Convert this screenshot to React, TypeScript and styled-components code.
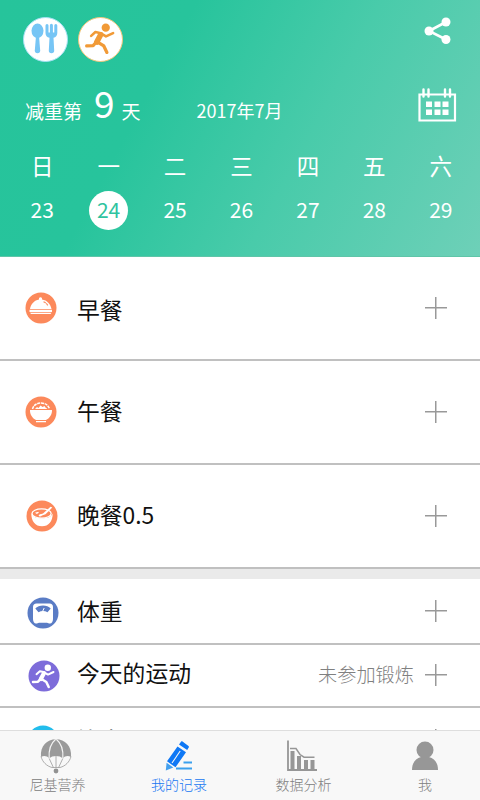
import React from 'react';
import styled, { createGlobalStyle } from 'styled-components';

const GlobalStyle = createGlobalStyle`
  * { box-sizing: border-box; }
  body {
    margin: 0;
    background: #fff;
    font-family: "Noto Sans CJK SC", sans-serif;
  }
`;

const Screen = styled.div`
  width: 480px;
  height: 800px;
  display: flex;
  flex-direction: column;
  overflow: hidden;
  background: #fff;
`;

const Header = styled.header`
  flex: none;
  height: 257px;
  color: #fff;
  background: linear-gradient(118deg, #26c49b 0%, #27c49c 32%, #49cbaa 62%, #6ed0b8 100%);
  border-bottom: 1px solid #5fc5a8;
`;

const TopBar = styled.div`
  display: flex;
  align-items: flex-start;
  height: 84px;
  padding: 17px 28px 0 23px;
  gap: 10px;
`;

const RoundBadge = styled.div<{ $edge: string }>`
  width: 45px;
  height: 45px;
  border-radius: 50%;
  background: #fff;
  border: 1.5px solid ${(p) => p.$edge};
  display: flex;
  svg { display: block; }
`;

const ShareButton = styled.div`
  margin-left: auto;
  width: 28px;
  height: 28px;
  svg { display: block; }
`;

const SummaryBar = styled.div`
  display: flex;
  height: 60px;
  padding: 0 23px 0 25px;
`;

const Label = styled.span<{ $size: number; $left?: number; $top?: number }>`
  font-size: ${(p) => p.$size}px;
  line-height: 30px;
  height: 30px;
  margin-left: ${(p) => p.$left ?? 0}px;
  margin-top: ${(p) => p.$top ?? 0}px;
  white-space: nowrap;
`;

const CalendarButton = styled.div`
  margin: 4px 0 0 auto;
  height: 36px;
  svg { display: block; }
`;

const Week = styled.div`
  display: grid;
  grid-template-columns: repeat(7, 1fr);
  grid-template-rows: 41px 51px;
  padding: 0 6px 0 9px;
  place-items: center;
`;

const Weekday = styled.span`
  font-size: 22.5px;
  line-height: 38px;
`;

const DayNumber = styled.span<{ $active: boolean }>`
  width: 39px;
  height: 39px;
  border-radius: 50%;
  text-align: center;
  font-size: 21px;
  line-height: 37px;
  color: ${(p) => (p.$active ? '#2fc3a0' : '#fff')};
  background: ${(p) => (p.$active ? '#fff' : 'transparent')};
`;

const List = styled.main`
  flex: 1;
  min-height: 0;
  overflow: hidden;
`;

const Row = styled.div<{ $height: number; $indent: number }>`
  display: flex;
  align-items: center;
  height: ${(p) => p.$height}px;
  padding: 0 33px 0 ${(p) => p.$indent}px;
  border-bottom: 2px solid #c0c0c0;
`;

const RowIcon = styled.div<{ $drop: number }>`
  width: 32px;
  height: 32px;
  margin-top: ${(p) => p.$drop * 2}px;
  svg { display: block; }
`;

const RowTitle = styled.span<{ $indent: number; $lift: number }>`
  width: 200px;
  margin-left: ${(p) => 20 - p.$indent}px;
  margin-top: ${(p) => -p.$lift}px;
  font-size: 22.8px;
  line-height: 32px;
  color: #111;
`;

const RowNote = styled.span`
  margin-left: auto;
  margin-right: 11px;
  margin-top: -3px;
  font-size: 19.2px;
  font-weight: 300;
  line-height: 28px;
  color: #808080;
`;

const Plus = styled.span<{ $lift: number }>`
  width: 22px;
  height: 22px;
  margin-left: auto;
  margin-top: ${(p) => -p.$lift}px;
  background:
    linear-gradient(#999, #999) center / 22px 1.5px no-repeat,
    linear-gradient(#999, #999) center / 1.5px 22px no-repeat;
  ${RowNote} + & { margin-left: 0; }
`;

const Separator = styled.div`
  height: 10px;
  background: #eaeaea;
`;

const TabBar = styled.nav`
  flex: none;
  height: 70px;
  display: flex;
  background: #f8f8f8;
  border-top: 1px solid #dedede;
`;

const Tab = styled.div<{ $width: number; $active?: boolean; $nudge?: number }>`
  flex: none;
  width: ${(p) => p.$width}px;
  display: flex;
  flex-direction: column;
  align-items: center;
  padding-top: 7px;
  font-size: 14px;
  font-weight: 300;
  line-height: 20px;
  color: ${(p) => (p.$active ? '#1677f2' : '#808080')};
  svg { display: block; margin-left: ${(p) => p.$nudge ?? 0}px; }
`;

/* Running figure on a 32-unit square, shared by the badge and the exercise row. */
const Runner = ({ color }: { color: string }) => (
  <g fill="none" stroke={color} strokeLinecap="round" strokeLinejoin="round">
    <circle cx="19.800" cy="7.800" r="3.200" fill={color} stroke="none" />
    <path d="M8.500 14.200l3.300-3 5 1.100M17 12.800l3 1.800 5.500-2.600" strokeWidth="2" />
    <path d="M15.800 13.400l-3 5.600" strokeWidth="4.200" />
    <path d="M12.200 19.300l-2.200 2.400-5 .3M13.500 19l4.800 3 2.400 5" strokeWidth="2.500" />
  </g>
);

const CutleryIcon = () => (
  <svg width="42" height="42" viewBox="0 0 42 42" fill="#76c5f5">
    <ellipse cx="13.500" cy="12.800" rx="6" ry="7.200" />
    <path d="M12 18h3l1.200 14.500a2.700 2.700 0 0 1-5.400 0z" />
    <path d="M21.500 7.500a1.500 1.500 0 0 1 3 0v7h1.400v-7.300a1.500 1.500 0 0 1 3 0v7.300h1.400v-7a1.500 1.500 0 0 1 3 0V15c0 2.800-1.500 4.300-3.800 4.700l.7 12.800a2.700 2.700 0 0 1-5.400 0l.7-12.800c-2.500-.4-4-1.900-4-4.700z" />
  </svg>
);

const RunBadgeIcon = () => (
  <svg width="42" height="42" viewBox="0 0 42 42">
    <g transform="translate(1.200 -.400) scale(1.290)"><Runner color="#f19a37" /></g>
  </svg>
);

const ShareIcon = () => (
  <svg width="28" height="28" viewBox="0 0 28 28" fill="#fff">
    <path d="M22 5L5 14l17 8.500" fill="none" stroke="#fff" strokeWidth="2.600" />
    <circle cx="22" cy="5" r="4.500" /><circle cx="5" cy="14" r="4.500" /><circle cx="22" cy="22.500" r="4.500" />
  </svg>
);

const CalendarIcon = () => (
  <svg width="39" height="36" viewBox="0 0 39 36">
    <path d="M1.500 6.500h35.500v26H1.500z" fill="none" stroke="#fff" strokeWidth="2.200" />
    <path d="M5.500 1.500v7M10.500 1.500v7M27 1.500v7M32 1.500v7" stroke="#fff" strokeWidth="2.400" strokeLinecap="round" />
    <path d="M8 13.500h6v5.500H8zM16.500 13.500h6v5.500h-6zM24.500 13.500h6v5.500h-6zM8 21.500h6v5.500H8zM16.500 21.500h6v5.500h-6zM24.500 21.500h6v5.500h-6z" fill="#fff" />
  </svg>
);

const Disc = ({ color, children }: { color: string; children?: React.ReactNode }) => (
  <svg width="32" height="32" viewBox="0 0 32 32">
    <circle cx="16" cy="16" r="15.500" fill={color} />
    {children}
  </svg>
);

const BreakfastIcon = () => (
  <Disc color="#fc895b">
    <path d="M5 17c.8-5 4.500-9 9-9.600v-1.200a1.600 1.600 0 0 1 3 0v1.200c5 .6 8.600 4.600 9.500 9.600z" fill="#fff" />
    <path d="M18.500 9.800c2 .8 3.400 2 4.300 3.700" stroke="#fc895b" strokeWidth="1.200" fill="none" strokeDasharray="2.500 .6" />
    <path d="M4.500 17.800h22.500v2.200H4.500zM5 20.800h21.500l-1 1.300H6z" fill="#fff" />
  </Disc>
);

const LunchIcon = () => (
  <Disc color="#fc895b">
    <path d="M5 14h22c.2 4.700-2.500 8.300-6 10H11c-3.500-1.700-6.200-5.300-6-10zM11 25h10v1.300H11z" fill="#fff" />
    <path d="M7.500 13c1-4 4.500-6 8.500-6s7.300 2 8.500 6" fill="none" stroke="#fff" strokeWidth="1.500" strokeDasharray="3 .7" />
    <path d="M10 13l2-2 1.500 1 2-2.500 2 1.500 2-1 1 1.500 2 1.500z" fill="#fff" />
  </Disc>
);

const DinnerIcon = () => (
  <Disc color="#fc895b">
    <path d="M5.300 13.500c0 7.700 4 12.800 10.700 12.800s10.700-5.100 10.700-12.800c-2 4-6 4.800-10.700 4.800s-8.700-.8-10.700-4.800z" fill="#fff" />
    <ellipse cx="15.600" cy="13.500" rx="9.600" ry="4.600" fill="none" stroke="#fff" strokeWidth="1.300" />
    <path d="M16 15.500c-1 1.200-3 1.200-3.300.2s1.800-1.700 4.300-2.200l7.500-6.700 1.800.8-6.800 6.700z" fill="#fff" />
    <path d="M9 12.700l3.300-1 .5 1-2 1.200z" fill="#fff" />
  </Disc>
);

const ScaleIcon = () => (
  <Disc color="#5a7cc5">
    <path d="M9.500 6.500h13c2.200 0 3.500 1.300 3.500 3.500v12c0 2.700-1.300 4.500-3 4.500-1.300 0-2-.8-3-.8h-8c-1 0-1.700.8-3 .8-1.700 0-3-1.800-3-4.500V10c0-2.200 1.300-3.500 3.500-3.500z" fill="#fff" />
    <path d="M8.300 11.500c3.500-4 12-4 15.400 0l-3.200 3.800c-2.800-1.600-6.200-1.600-9 0z" fill="#5a7cc5" />
    <path d="M15.400 14.800l1.800-3.800" stroke="#fff" strokeWidth="1" />
  </Disc>
);

const ExerciseIcon = () => (
  <Disc color="#7d6cda"><Runner color="#fff" /></Disc>
);

const ParachuteIcon = () => (
  <svg width="34" height="36" viewBox="0 0 34 36">
    <path d="M2 19C1 8 8 1.300 17 1.300S33 8 32 19c-2.800-1.500-6-1.200-8.200 1.500-3-3.300-10.600-3.300-13.600 0C8 17.800 4.800 17.500 2 19z" fill="#9a9a9a" />
    <path d="M2 18.500c1.500 5.500 5.500 9.500 11 11h8c5.500-1.500 9.500-5.500 11-11M10.200 20.500l4.200 9M17 18v11.500M23.800 20.500l-4.200 9" fill="none" stroke="#9a9a9a" strokeWidth=".8" />
    <path d="M16.700 1.200C12 5 9.500 12 10.200 20.500M17.300 1.200C22 5 24.500 12 23.800 20.500" fill="none" stroke="#f3f3f3" strokeWidth="1.200" />
    <circle cx="17" cy="33" r="2.400" fill="#929292" />
  </svg>
);

const PencilIcon = () => (
  <svg width="34" height="36" viewBox="0 0 34 36">
    <path d="M16.500 8.500l8.500 5.800-10.500 15-8.500-6zM18 6.500l2-2.700c.4-.5 1-.6 1.500-.3l6 4.600c.5.400.6 1 .2 1.500l-1.500 2.400z" fill="#0f78f5" />
    <path d="M19.200 13L11 25" stroke="#f8f8f8" strokeWidth="1.100" fill="none" />
    <path d="M5.600 24.800l6.700 4.800-7.500 2.900z" fill="#43a0ee" />
    <path d="M22.500 24.500h8.500M15 30.500h16" stroke="#3ba0ed" strokeWidth="2" />
  </svg>
);

const ChartIcon = () => (
  <svg width="32" height="36" viewBox="0 0 32 36">
    <path d="M2 2.500v29.500h29" fill="none" stroke="#969696" strokeWidth="1.800" />
    <path d="M4.500 13h4v19h-4zM11 18h4v14h-4zM18 22h4v10h-4zM24.500 22h4v10h-4z" fill="#969696" />
    <path d="M4 10.500h6l4 6 4 2.700h10.500" fill="none" stroke="#969696" strokeWidth="1.500" />
  </svg>
);

const PersonIcon = () => (
  <svg width="28" height="36" viewBox="0 0 28 36" fill="#979797">
    <circle cx="14" cy="12" r="8.500" />
    <path d="M1 32c0-7 3.500-11.800 9-13h8c5.500 1.200 9 6 9 13z" />
  </svg>
);

const days = [
  ['日', 23], ['一', 24], ['二', 25], ['三', 26], ['四', 27], ['五', 28], ['六', 29],
] as const;

interface Entry {
  title: string;
  icon: React.ReactNode;
  height: number;
  indent?: number;
  drop?: number;
  lift?: number;
  plusLift?: number;
  note?: string;
}

const meals: Entry[] = [
  { title: '早餐', icon: <BreakfastIcon />, height: 104, lift: -4 },
  { title: '午餐', icon: <LunchIcon />, height: 104, lift: 2, drop: -0.5 },
  { title: '晚餐0.5', icon: <DinnerIcon />, height: 104, indent: 1, lift: 2 },
];

const activity: Entry[] = [
  { title: '体重', icon: <ScaleIcon />, height: 66, indent: 2, drop: 2, lift: 1, plusLift: 0 },
  { title: '今天的运动', icon: <ExerciseIcon />, height: 63, indent: 3, lift: 5, plusLift: 2, note: '未参加锻炼' },
  { title: '饮水量', icon: <Disc color="#22bdec" />, height: 66, indent: 2, drop: 1, lift: 1 },
];

const EntryRow = ({ title, icon, height, indent = 0, drop = 0, lift = 0, plusLift = 0, note }: Entry) => (
  <Row $height={height} $indent={indent + 25}>
    <RowIcon $drop={drop}>{icon}</RowIcon>
    <RowTitle $indent={indent} $lift={lift}>{title}</RowTitle>
    {note && <RowNote>{note}</RowNote>}
    <Plus $lift={plusLift} />
  </Row>
);

export default function App() {
  return (
    <Screen>
      <GlobalStyle />
      <Header>
        <TopBar>
          <RoundBadge $edge="#a5e1f3"><CutleryIcon /></RoundBadge>
          <RoundBadge $edge="#f2c77d"><RunBadgeIcon /></RoundBadge>
          <ShareButton><ShareIcon /></ShareButton>
        </TopBar>
        <SummaryBar>
          <Label $size={19} $top={12}>减重第</Label>
          <Label $size={37} $left={12} $top={3}>9</Label>
          <Label $size={19} $left={7} $top={12}>天</Label>
          <Label $size={18} $left={56} $top={11}>2017年7月</Label>
          <CalendarButton><CalendarIcon /></CalendarButton>
        </SummaryBar>
        <Week>
          {days.map(([name]) => <Weekday key={name}>{name}</Weekday>)}
          {days.map(([, n]) => <DayNumber key={n} $active={n === 24}>{n}</DayNumber>)}
        </Week>
      </Header>
      <List>
        {meals.map((e) => <EntryRow key={e.title} {...e} />)}
        <Separator />
        {activity.map((e) => <EntryRow key={e.title} {...e} />)}
      </List>
      <TabBar>
        <Tab $width={115} $nudge={-3}><ParachuteIcon />尼基营养</Tab>
        <Tab $width={128} $active $nudge={-2}><PencilIcon />我的记录</Tab>
        <Tab $width={121} $nudge={-4}><ChartIcon />数据分析</Tab>
        <Tab $width={122}><PersonIcon />我</Tab>
      </TabBar>
    </Screen>
  );
}
